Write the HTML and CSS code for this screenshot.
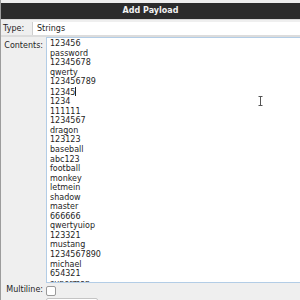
FILE: index.html
```html
<!DOCTYPE html>
<html>
<head>
	<title>Add Payload</title>
	<meta charset="UTF-8">
	<link rel="stylesheet" href="styles.css">
</head>
<body>
<div class="dialog">
	<div class="titlebar">Add Payload</div>
	<div class="type-row">
		<span class="type-label">Type:</span>
		<div class="select">Strings</div>
	</div>
	<div class="form">
		<span class="label contents-label">Contents:</span>
		<div class="contents">
			<div>123456</div>
			<div>password</div>
			<div>12345678</div>
			<div>qwerty</div>
			<div>123456789</div>
			<div>12345<span class="caret"></span></div>
			<div>1234</div>
			<div>111111</div>
			<div>1234567</div>
			<div>dragon</div>
			<div>123123</div>
			<div>baseball</div>
			<div>abc123</div>
			<div>football</div>
			<div>monkey</div>
			<div>letmein</div>
			<div>shadow</div>
			<div>master</div>
			<div>666666</div>
			<div>qwertyuiop</div>
			<div>123321</div>
			<div>mustang</div>
			<div>1234567890</div>
			<div>michael</div>
			<div>654321</div>
			<div>superman</div>
			<svg class="ibeam" width="5" height="10" viewBox="0 0 5 10">
				<path d="M0.5 0.5h4M2.5 0.5v9M0.5 9.5h4" stroke="#555" stroke-width="1" fill="none"/>
			</svg>
		</div>
		<span class="label">Multiline:</span>
		<div class="check-cell"><span class="checkbox"></span></div>
		<span></span>
		<div class="small-input"></div>
	</div>
</div>
</body>
</html>
```

FILE: styles.css
```css
html, body
{
	margin: 0;
	padding: 0;
	background: #efefef;
	font-family: "DejaVu Sans", sans-serif;
	font-size: 8px;
	color: #1e1e1e;
	overflow: hidden;
}
.dialog
{
	width: 300px;
	height: 300px;
	border-left: 1px solid #9c9c9c;
	box-sizing: border-box;
	padding-top: 3px;
}
.titlebar
{
	background: #2c2c2c;
	color: #f2f2f2;
	font-weight: bold;
	text-align: center;
	height: 16px;
	line-height: 16px;
	border-bottom: 1px solid #dadada;
}
.type-row
{
	display: flex;
	align-items: center;
	height: 14px;
	padding-top: 1px;
	border-bottom: 2px solid #dcdcdc;
}
.type-label
{
	width: 29px;
	padding-left: 2px;
}
.select
{
	flex: 1;
	background: #fff;
	height: 13px;
	line-height: 13px;
	padding-left: 4px;
	border-left: 1px solid #cfcfcf;
}
.form
{
	display: grid;
	grid-template-columns: 42px 1fr;
	column-gap: 3px;
	row-gap: 2px;
}
.label
{
	text-align: right;
	white-space: nowrap;
}
.contents-label
{
	padding-top: 4px;
}
.contents
{
	position: relative;
	background: #fff;
	border: 1px solid #b3cde6;
	border-right: none;
	height: 243px;
	overflow: hidden;
	padding: 1px 0 0 3px;
	line-height: 9.55px;
	margin-right: -4px;
}
.caret
{
	display: inline-block;
	width: 1px;
	height: 9px;
	background: #222;
	vertical-align: -1px;
}
.ibeam
{
	position: absolute;
	left: 211px;
	top: 58px;
}
.check-cell
{
	display: flex;
	align-items: center;
	height: 11px;
}
.checkbox
{
	width: 8px;
	height: 8px;
	border: 1px solid #9a9a9a;
	border-radius: 2px;
	background: #fff;
}
.small-input
{
	width: 50px;
	height: 12px;
	background: #fff;
	border: 1px solid #c4c4c4;
	border-radius: 2px;
}
```
